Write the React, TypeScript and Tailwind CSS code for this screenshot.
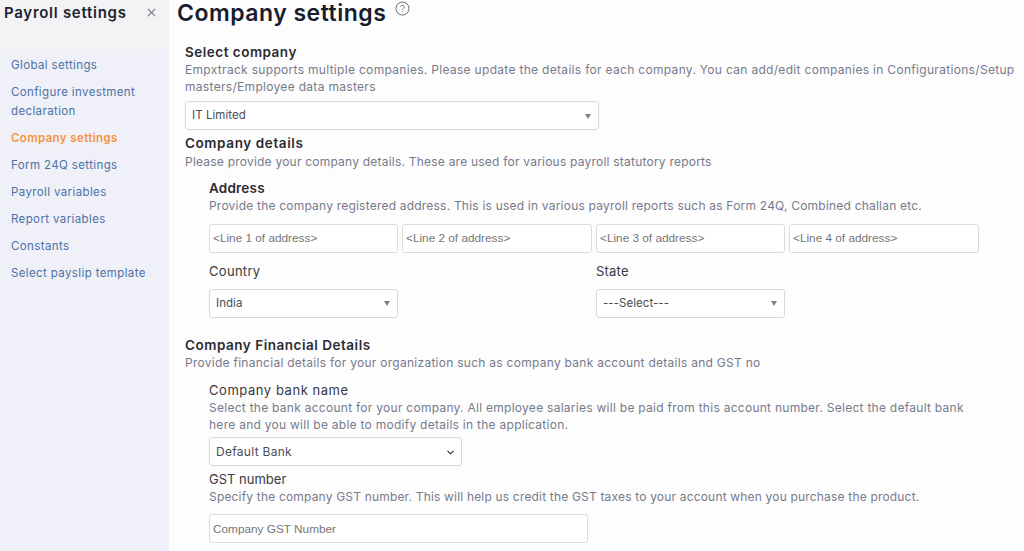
import { ChevronDown, X } from 'lucide-react'

const navItems = [
  'Global settings',
  'Configure investment declaration',
  'Company settings',
  'Form 24Q settings',
  'Payroll variables',
  'Report variables',
  'Constants',
  'Select payslip template',
]

function FakeSelect({ label, className }: { label: string; className: string }) {
  return (
    <div className={`flex items-center justify-between rounded-[3px] border border-[#d9d9d9] bg-white px-[6px] pt-[1px] text-[11.5px] tracking-[0.05px] text-[#4b4b55] ${className}`}>
      <span>{label}</span>
      <span className="mr-[1px] h-0 w-0 border-x-[3.5px] border-t-[5px] border-x-transparent border-t-[#808080]" />
    </div>
  )
}

function TextInput({ placeholder, className }: { placeholder: string; className: string }) {
  return (
    <input
      placeholder={placeholder}
      className={`h-[29px] rounded-[3px] border border-[#dcdcdc] bg-white px-[3px] font-['Liberation_Sans',sans-serif] text-[11.8px] outline-none placeholder:text-[#757575] ${className}`}
    />
  )
}

export default function App() {
  return (
    <div className="flex h-[551px] w-[1024px] overflow-hidden bg-[#fdfdfd] font-['Inter',sans-serif]">
      <aside className="flex w-[169px] shrink-0 flex-col bg-[#eff0f8]">
        <div className="flex h-[49px] items-start justify-between bg-[#f3f3f6] pl-[4px] pr-[11px] pt-[3px]">
          <h2 className="text-[15px] leading-[20px] font-semibold tracking-[0.72px] text-[#1d2230]">Payroll settings</h2>
          <X size={13} strokeWidth={2.5} className="mt-[3px] text-[#8d8d95]" />
        </div>
        <nav className="flex flex-col gap-[8px] pt-[7px] pr-[8px] pl-[11px] text-[11.5px] leading-[19px] tracking-[0.38px] text-[#4d70a6]">
          {navItems.map((item) => (
            <a key={item} className={item === 'Company settings' ? 'font-semibold text-[#f59342]' : ''}>
              {item}
            </a>
          ))}
        </nav>
      </aside>

      <main className="min-w-0 flex-1 pl-[8px] text-[#777a8c]">
        <div className="flex h-[27px] items-start">
          <h1 className="text-[23px] leading-[27px] font-semibold tracking-[0.5px] text-[#171c2e]">Company settings</h1>
          <svg className="mt-[1px] ml-[9px]" width="15" height="15" viewBox="0 0 15 15" fill="none" stroke="#6f6f76" strokeWidth="1">
            <circle cx="7.5" cy="7.5" r="6.5" />
            <path d="M5.6 5.9c0-1 .9-1.7 1.9-1.7s1.9.7 1.9 1.6c0 1.4-1.9 1.5-1.9 2.9" />
            <path d="M7.5 10.2v1" />
          </svg>
        </div>

        <section className="pt-[15px] pl-[8px]">
          <h3 className="text-[13.5px] leading-[20px] font-semibold tracking-[0.5px] text-[#2b2b33]">Select company</h3>
          <p className="w-[838px] text-[12px] leading-[16.5px] tracking-[0.31px]">
            Empxtrack supports multiple companies. Please update the details for each company. You can add/edit companies in Configurations/Setup masters/Employee data masters
          </p>
          <FakeSelect label="IT Limited" className="mt-[6px] h-[29px] w-[414px]" />

          <h3 className="mt-[3px] text-[13.5px] leading-[20px] font-semibold tracking-[0.6px] text-[#2b2b33]">Company details</h3>
          <p className="mt-[1px] text-[12px] leading-[16.5px] tracking-[0.22px]">Please provide your company details. These are used for various payroll statutory reports</p>

          <div className="pt-[8px] pl-[24px]">
            <h4 className="text-[13.5px] leading-[19px] font-semibold tracking-[0.2px] text-[#2b2b33]">Address</h4>
            <p className="text-[12px] leading-[16.5px] tracking-[0.21px]">Provide the company registered address. This is used in various payroll reports such as Form 24Q, Combined challan etc.</p>
            <div className="mt-[9.5px] flex gap-[4px]">
              <TextInput placeholder="<Line 1 of address>" className="w-[189px]" />
              <TextInput placeholder="<Line 2 of address>" className="w-[190px]" />
              <TextInput placeholder="<Line 3 of address>" className="w-[189px]" />
              <TextInput placeholder="<Line 4 of address>" className="w-[190px]" />
            </div>
            <div className="mt-[8px] flex">
              <div className="w-[387px]">
                <label className="block text-[13px] leading-[20px] tracking-[0.3px] text-[#3a3a42]">Country</label>
                <FakeSelect label="India" className="mt-[8px] h-[29px] w-[189px]" />
              </div>
              <div>
                <label className="block text-[13px] leading-[20px] tracking-[0.2px] text-[#3a3a42]">State</label>
                <FakeSelect label="---Select---" className="mt-[8px] h-[29px] w-[189px]" />
              </div>
            </div>
          </div>

          <h3 className="mt-[17px] text-[13.5px] leading-[20px] font-semibold tracking-[0.52px] text-[#2b2b33]">Company Financial Details</h3>
          <p className="text-[12px] leading-[16.5px] tracking-[0.27px]">Provide financial details for your organization such as company bank account details and GST no</p>

          <div className="pt-[10px] pl-[24px]">
            <label className="block text-[13px] leading-[18px] tracking-[0.55px] text-[#3a3a42]">Company bank name</label>
            <p className="w-[770px] text-[12px] leading-[17px] tracking-[0.27px]">
              Select the bank account for your company. All employee salaries will be paid from this account number. Select the default bank here and you will be able to modify details in the application.
            </p>
            <div className="mt-[4px] flex h-[29px] w-[253px] items-center justify-between rounded-[3px] border border-[#d9d9d9] bg-white pt-[1px] pr-[5px] pl-[6px] text-[12px] tracking-[0.3px] text-[#4b4b55]">
              <span>Default Bank</span>
              <ChevronDown size={11} strokeWidth={2.5} className="text-[#333]" />
            </div>
            <label className="mt-[4px] block text-[13px] leading-[18px] text-[#3a3a42]">GST number</label>
            <p className="text-[12px] leading-[17px] tracking-[0.18px]">Specify the company GST number. This will help us credit the GST taxes to your account when you purchase the product.</p>
            <TextInput placeholder="Company GST Number" className="mt-[9px] w-[379px]" />
          </div>
        </section>
      </main>
    </div>
  )
}
